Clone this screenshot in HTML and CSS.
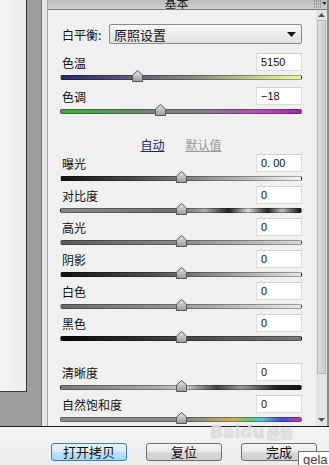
FILE: index.html
```html
<!DOCTYPE html>
<html lang="zh-CN">
<head>
  <meta charset="UTF-8" />
  <meta name="viewport" content="width=device-width, initial-scale=1.0">
  <title>基本</title>
  <link rel="stylesheet" href="styles.css">
</head>
<body>
  <div class="app">
    <div class="main">
      <div class="side"><div class="doc"></div></div>
      <div class="frame"></div>
      <div class="panel">
        <div class="panel-head">
          <span class="head-title">基本</span>
          <svg class="head-menu" width="13" height="8" viewBox="0 0 13 8">
            <path d="M1 1h8M1 4h8M1 7h8" stroke="#6a6a6a" stroke-width="1" stroke-dasharray="1 1"/>
            <path d="M9 2l2.5 3 2.5-3z" fill="#333"/>
          </svg>
        </div>
        <div class="panel-body">
          <div class="content">
            <div class="wb-row">
              <span class="label">白平衡:</span>
              <div class="select">
                <span>原照设置</span>
                <svg width="9" height="5" viewBox="0 0 9 5"><path d="M0 0h9L4.5 5z" fill="#111"/></svg>
              </div>
            </div>

            <div class="group group-wide">
              <div class="row"><span class="label">色温</span><div class="num">5150</div></div>
              <div class="track temp"><svg class="thumb" style="left:31.8%" width="11" height="12" viewBox="0 0 11 12"><path d="M0.5 5L5.5 0.5L10.5 5V11.5H0.5Z" fill="url(#tg)" stroke="#555"/></svg></div>
            </div>
            <div class="group">
              <div class="row"><span class="label">色调</span><div class="num">−18</div></div>
              <div class="track tint"><svg class="thumb" style="left:41.3%" width="11" height="12" viewBox="0 0 11 12"><path d="M0.5 5L5.5 0.5L10.5 5V11.5H0.5Z" fill="url(#tg)" stroke="#555"/></svg></div>
            </div>

            <div class="sep"></div>
            <div class="links"><a class="link-on">自动</a><a class="link-off">默认值</a></div>

            <div class="group">
              <div class="row"><span class="label">曝光</span><div class="num">0. 00</div></div>
              <div class="track exposure"><svg class="thumb" style="left:50%" width="11" height="12" viewBox="0 0 11 12"><path d="M0.5 5L5.5 0.5L10.5 5V11.5H0.5Z" fill="url(#tg)" stroke="#555"/></svg></div>
            </div>
            <div class="group">
              <div class="row"><span class="label">对比度</span><div class="num">0</div></div>
              <div class="track contrast"><svg class="thumb" style="left:50%" width="11" height="12" viewBox="0 0 11 12"><path d="M0.5 5L5.5 0.5L10.5 5V11.5H0.5Z" fill="url(#tg)" stroke="#555"/></svg></div>
            </div>
            <div class="group">
              <div class="row"><span class="label">高光</span><div class="num">0</div></div>
              <div class="track highlights"><svg class="thumb" style="left:50%" width="11" height="12" viewBox="0 0 11 12"><path d="M0.5 5L5.5 0.5L10.5 5V11.5H0.5Z" fill="url(#tg)" stroke="#555"/></svg></div>
            </div>
            <div class="group">
              <div class="row"><span class="label">阴影</span><div class="num">0</div></div>
              <div class="track shadows"><svg class="thumb" style="left:50%" width="11" height="12" viewBox="0 0 11 12"><path d="M0.5 5L5.5 0.5L10.5 5V11.5H0.5Z" fill="url(#tg)" stroke="#555"/></svg></div>
            </div>
            <div class="group">
              <div class="row"><span class="label">白色</span><div class="num">0</div></div>
              <div class="track whites"><svg class="thumb" style="left:50%" width="11" height="12" viewBox="0 0 11 12"><path d="M0.5 5L5.5 0.5L10.5 5V11.5H0.5Z" fill="url(#tg)" stroke="#555"/></svg></div>
            </div>
            <div class="group">
              <div class="row"><span class="label">黑色</span><div class="num">0</div></div>
              <div class="track blacks"><svg class="thumb" style="left:50%" width="11" height="12" viewBox="0 0 11 12"><path d="M0.5 5L5.5 0.5L10.5 5V11.5H0.5Z" fill="url(#tg)" stroke="#555"/></svg></div>
            </div>

            <div class="sep sep-low"></div>

            <div class="group">
              <div class="row"><span class="label">清晰度</span><div class="num">0</div></div>
              <div class="track clarity"><svg class="thumb" style="left:50%" width="11" height="12" viewBox="0 0 11 12"><path d="M0.5 5L5.5 0.5L10.5 5V11.5H0.5Z" fill="url(#tg)" stroke="#555"/></svg></div>
            </div>
            <div class="group">
              <div class="row"><span class="label">自然饱和度</span><div class="num">0</div></div>
              <div class="track vibrance"><svg class="thumb" style="left:50%" width="11" height="12" viewBox="0 0 11 12"><path d="M0.5 5L5.5 0.5L10.5 5V11.5H0.5Z" fill="url(#tg)" stroke="#555"/></svg></div>
            </div>
          </div>
          <div class="scrollbar">
            <svg width="7" height="4" viewBox="0 0 7 4"><path d="M0 4L3.5 0L7 4z" fill="#555"/></svg>
            <div class="scroll-thumb"></div>
            <div class="scroll-track"></div>
            <svg width="7" height="4" viewBox="0 0 7 4"><path d="M0 0L3.5 4L7 0z" fill="#555"/></svg>
          </div>
        </div>
      </div>
    </div>
    <div class="actions">
      <button class="btn btn-default">打开拷贝</button>
      <button class="btn">复位</button>
      <button class="btn">完成</button>
    </div>
    <div class="watermark">Baidu<span>经验</span></div>
    <div class="tip">gela</div>
  </div>

  <svg width="0" height="0" class="defs">
    <defs>
      <linearGradient id="tg" x1="0" y1="0" x2="0" y2="1">
        <stop offset="0" stop-color="#e4e4e4"/>
        <stop offset="1" stop-color="#9a9a9a"/>
      </linearGradient>
    </defs>
  </svg>
</body>
</html>
```

FILE: styles.css
```css
html, body {
  margin: 0; padding: 0;
  width: 329px; height: 465px;
  overflow: hidden;
  font-family: "Noto Sans CJK SC", "Noto Sans", sans-serif;
  font-size: 12px;
  color: #111;
}
.defs { position: absolute; }
.app {
  position: relative;
  display: flex; flex-direction: column;
  width: 329px; height: 465px;
  background: #f0f0f0;
}
.main {
  display: flex;
  height: 426px;
  border-bottom: 1px solid #1c1c1c;
}
.side {
  width: 41px;
  background: #9d9d9d;
  border-right: 1px solid #727272;
}
.doc {
  width: 26px; height: 391px;
  background: linear-gradient(to right, #f4f4f4, #ececec);
  border-right: 1px solid #3a3a3a;
  border-bottom: 1px solid #3a3a3a;
}
.frame {
  width: 5px;
  background: #e6e6e6;
}
.panel {
  flex: 1;
  display: flex; flex-direction: column;
  border-left: 1px solid #a4a4a4;
  border-right: 2px solid #8c8c8c;
  background: #f0f0f0;
}
.panel-head {
  height: 9px;
  display: flex; align-items: flex-end; justify-content: center;
  padding-right: 22px;
  overflow: hidden;
  background: linear-gradient(#bdbdbd, #cfcfcf);
  border-bottom: 1px solid #7e7e7e;
  position: relative;
}
.head-title {
  line-height: 12px;
  font-size: 12px;
  color: #222;
}
.head-menu {
  position: absolute;
  right: 1px; top: 0;
}
.panel-body {
  flex: 1;
  display: flex;
  overflow: hidden;
}
.content {
  flex: 1;
  padding: 14px 14px 0 12px;
  display: flex; flex-direction: column;
}
.label {
  padding-left: 2px;
  white-space: nowrap;
}
.wb-row {
  display: flex; align-items: center;
  height: 20px;
  margin-bottom: 9px;
}
.wb-row .label { width: 47px; }
.select {
  flex: 1;
  height: 18px;
  display: flex; align-items: center; justify-content: space-between;
  padding: 0 5px 0 4px;
  border: 1px solid #8a8a8a;
  border-radius: 2px;
  background: linear-gradient(#f7f7f7, #e2e2e2);
  font-size: 13px;
}
.group {
  display: flex; flex-direction: column;
  margin-bottom: 5px;
}
.group-wide { margin-bottom: 7px; }
.row {
  display: flex; align-items: center; justify-content: space-between;
  height: 18px;
  margin-bottom: 4px;
}
.num {
  width: 40px; height: 16px;
  padding-left: 4px;
  line-height: 16px;
  background: #fff;
  border: 1px solid #dcdcdc;
  border-top-color: #cfcfcf;
  font-family: "Liberation Sans", Arial, sans-serif;
  font-size: 11px;
  white-space: pre;
}
.track {
  position: relative;
  height: 3px;
  border: 1px solid rgba(0,0,0,0.3);
  border-radius: 2px;
}
.thumb {
  position: absolute;
  top: -6px;
  margin-left: -5.5px;
}
.temp { background: linear-gradient(to right, #27276a, #555578 25%, #8a8a80 55%, #c8c890 80%, #f2f2a6); }
.tint { background: linear-gradient(to right, #3fae3f, #6a8a6a 30%, #8a7a8a 60%, #b050b0 85%, #a02aa0); }
.exposure { background: linear-gradient(to right, #111, #555 35%, #aaa 70%, #f4f4f4); }
.contrast { background: linear-gradient(to right, #8a8a8a, #6e6e6e 50%, #aaa 60%, #222 70%, #ddd 78%, #222 86%, #bbb 92%, #111); }
.highlights { background: linear-gradient(to right, #5a5a5a, #8a8a8a 50%, #d8d8d8); }
.shadows { background: linear-gradient(to right, #111, #555 40%, #aaa 75%, #e6e6e6); }
.whites { background: linear-gradient(to right, #6a6a6a, #999 50%, #e8e8e8); }
.blacks { background: linear-gradient(to right, #080808, #444 50%, #7a7a7a); }
.clarity { background: linear-gradient(to right, #7a7a7a, #aaa 40%, #ccc 52%, #444 65%, #999 75%, #222 90%, #111); }
.vibrance { background: linear-gradient(to right, #8a8a8a, #8a8a8a 55%, #c8b060 72%, #6ac070 78%, #60c0d0 84%, #4050c0 92%, #c040a0); }
.sep {
  height: 1px;
  margin: 12px -7px 5px -7px;
  background: #2a2a2a;
}
.sep-low { margin: 9px -7px 8px -7px; }
.links {
  height: 18px;
  line-height: 18px;
  display: flex; justify-content: center;
  gap: 21px;
}
.links a { text-decoration: underline; }
.link-on { color: #1c2a6e; }
.link-off { color: #9a9a9a; }
.scrollbar {
  width: 11px;
  display: flex; flex-direction: column; align-items: center;
  padding: 3px 0 4px;
  gap: 3px;
  background: #e4e4e4;
}
.scroll-thumb {
  width: 7px; height: 352px;
  border: 1px solid #b8b8b8;
  background: linear-gradient(to right, #dcdcdc, #cfcfcf);
}
.scroll-track { flex: 1; }
.actions {
  flex: 1;
  display: flex; gap: 19px;
  padding: 16px 0 0 51px;
  background: linear-gradient(#f3f3f3, #ececec);
}
.btn {
  width: 76px; height: 18px;
  padding: 0;
  border: 1px solid #707070;
  border-radius: 3px;
  background: linear-gradient(#f4f4f4 0%, #e8e8e8 50%, #d8d8d8 51%, #d0d0d0 100%);
  font-family: "Noto Sans CJK SC", sans-serif;
  font-size: 13px;
  line-height: 16px;
  color: #111;
}
.btn-default {
  border-color: #3c7fb1;
  background: linear-gradient(#e8f4fc 0%, #d8ecfa 50%, #bee2f8 51%, #a8d6f4 100%);
}
.watermark {
  position: absolute;
  left: 210px; top: 422px;
  font-family: "DejaVu Sans", sans-serif;
  font-weight: bold;
  font-size: 17px;
  color: rgba(230,230,230,0.8);
  text-shadow: 0 0 1px rgba(120,120,120,0.4);
}
.watermark span { font-size: 13px; margin-left: 2px; }
.tip {
  position: absolute;
  left: 298px; top: 451px;
  padding: 0 4px;
  height: 16px; line-height: 16px;
  background: #fff;
  border: 1px solid #767676;
  font-family: "Liberation Sans", Arial, sans-serif;
  font-size: 13px;
  color: #444;
}
```
